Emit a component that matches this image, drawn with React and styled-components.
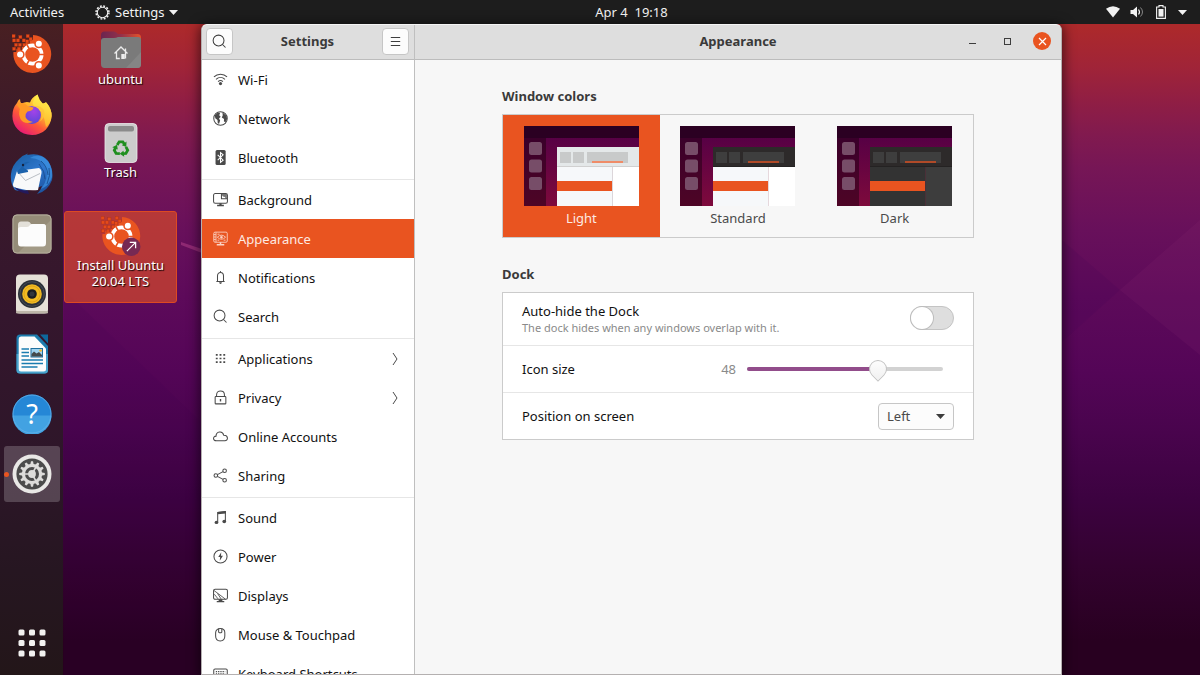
import React, { useState } from 'react';
import styled, { createGlobalStyle, css } from 'styled-components';

const GlobalStyle = createGlobalStyle`
  * {
    box-sizing: border-box;
  }
  body {
    margin: 0;
    font-family: 'Noto Sans', 'Open Sans', sans-serif;
    font-size: 13px;
    line-height: 18px;
    color: #111111;
  }
  button, input, select {
    font: inherit;
    color: inherit;
    margin: 0;
  }
  button {
    border: none;
    background: none;
    padding: 0;
  }
`;

const Screen = styled.div`
  display: flex;
  flex-direction: column;
  height: 100vh;
  overflow: hidden;
  position: relative;
  isolation: isolate;
  background: linear-gradient(
    #ac292b 4%, #a02438 10%, #901e44 15%, #811a4f 20%, #761656 25%, #68105b 34%,
    #5d0a5a 44%, #540557 55%, #49044d 64%, #3c0240 74%, #33022f 84%, #280020 95%
  );
`;

const Wallpaper = styled.svg`
  position: absolute;
  inset: 0;
  width: 100%;
  height: 100%;
  z-index: -1;
`;

const TopBar = styled.header`
  display: grid;
  grid-template-columns: 63px 1fr auto 1fr;
  align-items: center;
  height: 24px;
  flex: none;
  background-color: #1d1d1d;
  color: #f2f2f2;
  white-space: nowrap;
`;

const BarButton = styled.button`
  display: flex;
  align-items: center;
  gap: 5px;
  padding-left: ${(props) => props.$left || 0}px;
`;

const Status = styled.button`
  display: flex;
  justify-content: flex-end;
  align-items: center;
  gap: 10px;
  padding-right: 13px;
`;

const Desktop = styled.div`
  display: flex;
  flex: 1;
  min-height: 0;
`;

const DockBar = styled.nav`
  display: flex;
  flex-direction: column;
  align-items: center;
  gap: 4px;
  width: 63px;
  flex: none;
  padding: 2px 0 4px;
  background: linear-gradient(#481f22, #3c1a2a 16%, #34162d 45%, #2e1629 66%, #261621 84%, #231619);
`;

const DockItem = styled.button`
  display: flex;
  align-items: center;
  justify-content: center;
  width: 56px;
  height: 56px;
  flex: none;
  border-radius: 3px;
  ${(props) => props.$active && css`
    position: relative;
    background-color: rgba(255, 255, 255, 0.2);
    &::before {
      content: '';
      position: absolute;
      left: 0;
      width: 5px;
      height: 5px;
      border-radius: 50%;
      background-color: #e95420;
    }
  `}
  ${(props) => props.$last && css`
    margin-top: auto;
  `}
`;

const Shortcuts = styled.div`
  display: flex;
  flex-direction: column;
  gap: 1px;
  width: 138px;
  flex: none;
  padding: 1px 0 0 1px;
`;

const Shortcut = styled.button`
  display: flex;
  flex-direction: column;
  align-items: center;
  gap: 1px;
  width: 113px;
  height: 92px;
  padding-top: 4px;
  border: 1px solid ${(props) => (props.$selected ? '#dd4a22' : 'transparent')};
  border-radius: 3px;
  background-color: ${(props) => (props.$selected ? 'rgba(214, 72, 42, 0.7)' : 'transparent')};
  color: #ffffff;
  line-height: 16px;
  text-shadow: 1px 1px 1px rgba(0, 0, 0, 0.9);
`;

const ShortcutLine = styled.span`
  display: block;
`;

const Window = styled.main`
  display: flex;
  flex: 1;
  min-width: 0;
  margin-right: 138px;
  border: 1px solid #b4b0b0;
  border-top-color: #f4f4f4;
  border-radius: 6px 6px 0 0;
  overflow: hidden;
  background-color: #f7f7f7;
  box-shadow: 0 2px 12px 2px rgba(0, 0, 0, 0.55);
`;

const Sidebar = styled.aside`
  display: flex;
  flex-direction: column;
  width: 213px;
  flex: none;
  border-right: 1px solid #bfbfbf;
  background-color: #ffffff;
`;

const HeaderBar = styled.div`
  display: flex;
  align-items: center;
  justify-content: space-between;
  height: 35px;
  flex: none;
  padding: 0 5px 2px 4px;
  border-bottom: 1px solid #bcbcbc;
  background-color: #dedede;
`;

const PanelHeader = styled(HeaderBar)`
  display: grid;
  grid-template-columns: 1fr auto 1fr;
  padding: 0 10px 2px;
`;

const Title = styled.h1`
  margin: 0;
  font-size: 13px;
  font-weight: 700;
  color: #3a3a3a;
`;

const HeaderButton = styled.button`
  display: flex;
  align-items: center;
  justify-content: center;
  width: 27px;
  height: 27px;
  border: 1px solid #c6c6c6;
  border-radius: 4px;
  background-color: #fcfcfc;
  color: #3d3d3d;
`;

const WindowControls = styled.div`
  display: flex;
  justify-content: flex-end;
  gap: 17px;
`;

const WindowControl = styled.button`
  display: flex;
  align-items: center;
  justify-content: center;
  width: 18px;
  height: 18px;
  border-radius: 50%;
  color: ${(props) => (props.$close ? '#ffffff' : '#3d3d3d')};
  background-color: ${(props) => (props.$close ? '#e95420' : 'transparent')};
`;

const NavList = styled.nav`
  flex: 1;
  min-height: 0;
  overflow: hidden;
`;

const NavGroup = styled.div`
  padding-bottom: 2px;
  border-bottom: 1px solid #e6e6e6;
`;

const NavRow = styled.button`
  display: flex;
  align-items: center;
  gap: 10px;
  width: 100%;
  height: 39px;
  padding: 0 15px 0 11px;
  text-align: left;
  color: ${(props) => (props.$active ? '#fdeae3' : '#111111')};
  background-color: ${(props) => (props.$active ? '#e95420' : 'transparent')};
  svg {
    flex: none;
    color: ${(props) => (props.$active ? '#fbd5c8' : '#4a4a4a')};
  }
`;

const NavLabel = styled.span`
  flex: 1;
`;

const Panel = styled.section`
  display: flex;
  flex-direction: column;
  flex: 1;
  min-width: 0;
`;

const PanelBody = styled.div`
  width: 100%;
  max-width: 472px;
  margin: 0 auto;
`;

const SectionTitle = styled.h2`
  margin: 27px 0 9px;
  font-size: 13px;
  font-weight: 700;
  line-height: 18px;
  color: #3a3a3a;
`;

const Themes = styled.div`
  display: grid;
  grid-template-columns: repeat(3, 1fr);
  height: 124px;
  border: 1px solid #cbcbcb;
`;

const ThemeCard = styled.label`
  display: flex;
  flex-direction: column;
  align-items: center;
  gap: 3px;
  padding-top: 11px;
  color: ${(props) => (props.$active ? '#fdeae3' : '#4a4a4a')};
  background-color: ${(props) => (props.$active ? '#e95420' : 'transparent')};
`;

const HiddenRadio = styled.input`
  position: absolute;
  opacity: 0;
  pointer-events: none;
`;

const Options = styled.div`
  border: 1px solid #cbcbcb;
  background-color: #ffffff;
`;

const OptionRow = styled.div`
  display: flex;
  align-items: center;
  gap: 11px;
  height: ${(props) => (props.$tall ? 52 : 46)}px;
  padding: ${(props) => (props.$tall ? '0 19px 2px' : '0 19px')};
  & + & {
    box-sizing: content-box;
    border-top: 1px solid #e6e6e6;
  }
`;

const OptionLabel = styled.label`
  flex: 1;
`;

const Hint = styled.span`
  display: block;
  font-size: 11px;
  line-height: 15px;
  color: #8a8a8a;
`;

const Switch = styled.input`
  appearance: none;
  display: flex;
  width: 44px;
  height: 24px;
  border: 1px solid #c4c4c4;
  border-radius: 12px;
  background-color: ${(props) => (props.checked ? '#924d8b' : '#dedede')};
  justify-content: ${(props) => (props.checked ? 'flex-end' : 'flex-start')};
  &::before {
    content: '';
    width: 22px;
    height: 22px;
    border-radius: 50%;
    background-color: #ffffff;
    box-shadow: 0 0 0 1px #bdbdbd;
  }
`;

const Value = styled.output`
  color: #8a8a8a;
`;

const Slider = styled.div`
  display: grid;
  align-items: center;
  width: 196px;
  margin-right: 11px;
`;

const SliderBar = styled.div`
  grid-area: 1 / 1;
  height: 4px;
  border-radius: 2px;
  background-color: #d2d2d2;
  overflow: hidden;
`;

const SliderFill = styled.div`
  height: 100%;
  background-color: #924d8b;
`;

/* runs half a thumb past the bar at both ends, so that the pin's tip can reach them */
const Range = styled.input`
  grid-area: 1 / 1;
  appearance: none;
  height: 24px;
  width: calc(100% + 18px);
  margin: 0 -9px;
  background: transparent;
  &::-webkit-slider-thumb {
    appearance: none;
    width: 18px;
    height: 18px;
    border: 1px solid #c2c2c2;
    border-radius: 50% 50% 0 50%;
    background: linear-gradient(135deg, #ffffff, #f0f0f0);
    transform: rotate(45deg);
  }
`;

const SelectBox = styled.div`
  display: grid;
  align-items: center;
  justify-items: end;
  svg {
    grid-area: 1 / 1;
    margin-right: 9px;
    pointer-events: none;
  }
`;

const Select = styled.select`
  grid-area: 1 / 1;
  appearance: none;
  width: 76px;
  height: 27px;
  padding: 0 8px;
  border: 1px solid #c6c6c6;
  border-radius: 4px;
  background-color: #fcfcfc;
  color: #4a4a4a;
`;

const Symbolic = ({ size = 15, children }) => (
  <svg width={size} height={size} viewBox="0 0 16 16" fill="none" stroke="currentColor" strokeWidth="1.1">
    {children}
  </svg>
);

const Caret = ({ width = 9, color = 'currentColor' }) => (
  <svg width={width} height="5" viewBox="0 0 9 5">
    <path d="M0 0H9L4.5 5Z" fill={color} />
  </svg>
);

const navIcons = {
  wifi: (
    <>
      <path d="M1 5.2C4.8 1.4 11.2 1.4 15 5.2M3.2 7.8C6 5.2 10 5.2 12.8 7.8M5.4 10.2C7 8.9 9 8.9 10.6 10.2" />
      <circle cx="8" cy="12.3" r="1.7" fill="currentColor" stroke="none" />
    </>
  ),
  network: (
    <>
      <circle cx="8" cy="8" r="7.2" />
      <path d="M2 4.5L5 1.8 7.6 2 6.6 4.4 8.2 6.2 6.4 8 7.6 10 6.4 13.8 5 12.4 4.8 9.6 2.4 7.6ZM10 1.4L14.4 5 15 8.4 13.2 12.2 11.6 11 11.8 8.4 9.4 6.8 10.4 4.6Z" fill="currentColor" stroke="none" />
    </>
  ),
  bluetooth: (
    <>
      <rect x="2.7" y="0" width="10.8" height="16" rx="1.6" fill="currentColor" stroke="none" />
      <path d="M5 5.2L10.8 10.8 8 13.2V2.8L10.8 5.2 5 10.8" stroke="#ffffff" />
    </>
  ),
  background: (
    <>
      <rect x="0.6" y="1.6" width="14.8" height="10.4" rx="1.8" />
      <path d="M9.2 2H14.8V7.6Q13 7.4 12.8 5.2Q9.600 5 9.2 2Z" fill="currentColor" stroke="none" opacity="0.75" />
      <path d="M9 2.2V7.2H14.8" />
      <path d="M6.8 12H9.2V13.6H11.6V15.2H4.4V13.6H6.8Z" fill="currentColor" stroke="none" />
    </>
  ),
  appearance: (
    <g strokeWidth="0.9">
      <rect x="0.8" y="1.2" width="14.4" height="10.8" rx="1.4" />
      <path d="M3.2 1.5V12M1 3.8H3M1 6.4H3M1 9H3M4.6 6.6Q9 2.2 13.4 6.6Q9 11 4.6 6.6ZM4.8 3.4H7M11.4 9.8H13.4M4.8 9.8H6.6" />
      <circle cx="9" cy="6.6" r="1" fill="currentColor" />
      <path d="M8 12V14.4M4 14.6H12" strokeWidth="1.6" />
    </g>
  ),
  notifications: (
    <>
      <path d="M3.6 12.2H12.4M4.8 12V6.4C4.8 1.4 11.2 1.4 11.2 6.4V12" />
      <path d="M6.5 13H9.5Q9.2 14.8 8 14.8Q6.8 14.8 6.5 13Z" fill="currentColor" stroke="none" />
      <path d="M8 1.2V2.6" />
    </>
  ),
  search: (
    <>
      <circle cx="7" cy="7" r="5.8" />
      <path d="M11.2 11.2L14.4 14.4" />
    </>
  ),
  applications: (
    <path d="M3 4.2H5M7 4.2H9M11 4.2H13M3 8H5M7 8H9M11 8H13M3 11.8H5M7 11.8H9M11 11.8H13" strokeWidth="1.8" />
  ),
  privacy: (
    <>
      <rect x="2.3" y="7" width="11.4" height="7.8" rx="0.8" />
      <path d="M3.8 7V5.2C3.8 -0.4 12.2 -0.4 12.2 5.2V7" />
      <path d="M8 9.6V12.2" strokeWidth="1.5" />
    </>
  ),
  accounts: (
    <path d="M3.6 12.6C-0.6 12.6 -0.2 7.6 3.2 7.6C3.4 2.4 10.2 1.4 11.4 6.6C16.4 6.4 16.6 12.6 12.6 12.6Z" />
  ),
  sharing: (
    <>
      <circle cx="3" cy="8" r="1.9" />
      <circle cx="12.4" cy="3" r="1.9" />
      <circle cx="12.4" cy="13" r="1.9" />
      <path d="M4.7 7.1L10.7 3.9M4.7 8.9L10.7 12.1" />
    </>
  ),
  sound: (
    <>
      <path d="M5 13V2.6L13.2 1.6V12" />
      <path d="M5 2L13.7 1V3.6L5 4.6Z" fill="currentColor" stroke="none" />
      <ellipse cx="3.7" cy="13.2" rx="2" ry="1.8" fill="currentColor" stroke="none" />
      <ellipse cx="12" cy="12.2" rx="2" ry="1.8" fill="currentColor" stroke="none" />
    </>
  ),
  power: (
    <>
      <circle cx="8" cy="8" r="7" />
      <path d="M8.8 3.4L5.6 8.6H7.6L7.2 12.6 10.6 7.2H8.5Z" fill="currentColor" stroke="none" />
    </>
  ),
  displays: (
    <>
      <rect x="0.6" y="1.4" width="14.8" height="10.6" rx="1.6" />
      <path d="M1 2.6L13.4 12M1.4 6.6L5.4 11.6M4.8 5.8L8.6 11.6" strokeWidth="0.9" />
      <path d="M6 12H10V13.8H12V15.2H4V13.8H6Z" fill="currentColor" stroke="none" />
    </>
  ),
  mouse: (
    <>
      <path d="M2.8 6C2.8 0.2 12.6 0.2 12.6 6V9.6C12.6 16.6 2.8 16.6 2.8 9.6Z" />
      <path d="M6 1.9V5.4Q7.7 7 9.4 5.4V1.9" />
    </>
  ),
  keyboard: (
    <>
      <rect x="0.8" y="3.2" width="14.4" height="10" rx="1.4" />
      <path d="M3 6H13M3 8.4H13" strokeDasharray="1.4 1" />
    </>
  ),
};

const navGroups = [
  [
    { icon: 'wifi', label: 'Wi-Fi' },
    { icon: 'network', label: 'Network' },
    { icon: 'bluetooth', label: 'Bluetooth' },
  ],
  [
    { icon: 'background', label: 'Background' },
    { icon: 'appearance', label: 'Appearance' },
    { icon: 'notifications', label: 'Notifications' },
    { icon: 'search', label: 'Search' },
  ],
  [
    { icon: 'applications', label: 'Applications', more: true },
    { icon: 'privacy', label: 'Privacy', more: true },
    { icon: 'accounts', label: 'Online Accounts' },
    { icon: 'sharing', label: 'Sharing' },
  ],
  [
    { icon: 'sound', label: 'Sound' },
    { icon: 'power', label: 'Power' },
    { icon: 'displays', label: 'Displays' },
    { icon: 'mouse', label: 'Mouse & Touchpad' },
    { icon: 'keyboard', label: 'Keyboard Shortcuts' },
  ],
];

const themes = [
  { name: 'Light', header: '#e4e8e9', tool: '#c8caca', line: '#ef8c68', edge: '#d0d0d0', body: '#f6f8fa', side: '#ffffff', split: '#dcd6da' },
  { name: 'Standard', header: '#2d2a2a', tool: '#3e3e3e', line: '#b04a28', edge: '#242222', body: '#f6f8fa', side: '#ffffff', split: '#e6d8dd' },
  { name: 'Dark', header: '#2d2a2a', tool: '#3e3e3e', line: '#b04a28', edge: '#242222', body: '#333333', side: '#3d3d3d', split: '#4a3038' },
];

const ThemePreview = ({ theme }) => (
  <svg width="115" height="80" viewBox="0 0 115 80" shapeRendering="crispEdges">
    <defs>
      <linearGradient id={`desk${theme.name}`} x1="0" y1="0" x2="0" y2="1">
        <stop offset="0.1" stopColor="#550045" />
        <stop offset="1" stopColor="#7e0a3c" />
      </linearGradient>
    </defs>
    <rect width="115" height="80" fill={`url(#desk${theme.name})`} />
    <rect width="22" height="80" fill="#1e0010" opacity="0.5" />
    <rect width="115" height="12" fill="#2b0022" />
    <g fill="#774d68" shapeRendering="auto">
      <rect x="5" y="16" width="13" height="13" rx="2.5" />
      <rect x="5" y="33.5" width="13" height="13" rx="2.5" />
      <rect x="5" y="51" width="13" height="13" rx="2.5" />
    </g>
    <rect x="33" y="21" width="82" height="20" fill={theme.header} />
    <rect x="33" y="41" width="55" height="39" fill={theme.body} />
    <rect x="89" y="41" width="26" height="39" fill={theme.side} />
    <rect x="33" y="40" width="82" height="1" fill={theme.edge} />
    <rect x="88" y="41" width="1" height="39" fill={theme.split} />
    <rect x="36" y="26" width="11" height="11" fill={theme.tool} />
    <rect x="49" y="26" width="11" height="11" fill={theme.tool} />
    <rect x="63" y="26" width="41" height="11" fill={theme.tool} />
    <rect x="68" y="35" width="31" height="2" fill={theme.line} />
    <rect x="33" y="55" width="55" height="10" fill="#e95420" />
  </svg>
);

const pixels = [
  [-0.5, 0], [6.5, 1], [14, 0], [17, 3], [0, 4.5], [4, 4.5], [10, 4.5], [13.5, 5.5],
  [2, 9], [6, 9], [10.5, 9], [0, 13], [5, 13],
];

const UbuntuIcon = ({ children }) => (
  <svg width="40" height="40" viewBox="-0.5 -0.5 41 41">
    <path
      d="M21 0.6A19.4 19.4 0 1 1 1 18H4V14.5H8V16.5H9.5V12.5H14V9H17.5V5.5H21Z"
      fill="#e95420"
    />
    {pixels.map(([x, y]) => (
      <rect key={`${x}-${y}`} x={x} y={y} width="3.2" height="3.2" fill="#e64a1a" stroke="#a8320f" strokeWidth="0.3" />
    ))}
    <circle cx="20.5" cy="20.5" r="9.4" fill="none" stroke="#ffffff" strokeWidth="3.8" />
    <path d="M20.5 20.5H33M20.5 20.5L14 9.200M20.5 20.5L14 31.800" stroke="#e95420" strokeWidth="1.6" />
    <g fill="#ffffff" stroke="#e95420" strokeWidth="1.6">
      <circle cx="7.8" cy="20.5" r="3.9" />
      <circle cx="27" cy="9.4" r="3.9" />
      <circle cx="27" cy="31.8" r="3.9" />
    </g>
    {children}
  </svg>
);

const FirefoxIcon = () => (
  <svg width="40" height="41" viewBox="0 0 40 41">
    <defs>
      <linearGradient id="fxBody" x1="0.85" y1="0.1" x2="0.25" y2="1">
        <stop offset="0" stopColor="#fff14a" />
        <stop offset="0.35" stopColor="#ffb52e" />
        <stop offset="0.62" stopColor="#ff5a37" />
        <stop offset="1" stopColor="#e5157a" />
      </linearGradient>
      <linearGradient id="fxTail" x1="0.6" y1="0" x2="0.4" y2="1">
        <stop offset="0" stopColor="#fff650" />
        <stop offset="1" stopColor="#ffb02a" />
      </linearGradient>
      <radialGradient id="fxGlobe" cx="0.6" cy="0.3" r="0.8">
        <stop offset="0" stopColor="#a343e8" />
        <stop offset="0.6" stopColor="#7146dd" />
        <stop offset="1" stopColor="#4a4fd0" />
      </radialGradient>
    </defs>
    <path d="M5 9Q6 6 8 5Q8 8 9.5 9.5Q14 7 18 8.5Q19 4 25.5 0.5Q26 6 30 9.5Q33 9 34 8Q40 15 39.6 22C39 33 31 41 20 41C8 41 0.4 32 0.4 22Q0.4 14 5 9Z" fill="url(#fxBody)" />
    <path d="M25.5 0.5Q27 6 31.5 10.5Q34.5 13 34.5 9Q39.5 15 39.6 22Q39 29 34 33Q33 26 30 18Q21 13 20.5 9Q22 4 25.5 0.5Z" fill="url(#fxTail)" />
    <circle cx="20" cy="21" r="9" fill="url(#fxGlobe)" />
    <path d="M4.5 10Q12 7 16 12.5L21.5 13.5Q21 17 15.5 17.5Q12.8 20 13.5 23Q15 27 21 28Q12 31 8.5 25Q6 19 8 15Z" fill="#ff9a26" />
    <path d="M20 13Q27 12 29 17Q31 24 27 28Q34 24 32 16Q27 10 20 13Z" fill="#ffc43a" opacity="0.8" />
  </svg>
);

const ThunderbirdIcon = () => (
  <svg width="44" height="42" viewBox="0 0 44 42">
    <defs>
      <linearGradient id="tbBody" x1="0.2" y1="0" x2="0.9" y2="1">
        <stop offset="0" stopColor="#1a5fa5" />
        <stop offset="0.5" stopColor="#2f78cf" />
        <stop offset="1" stopColor="#184a94" />
      </linearGradient>
    </defs>
    <path d="M9 6Q13 2 18 0.5L17 2Q31 -1 38 8Q44 17 42 27Q38 38 27 41Q31 37 32 33Q14 40 5 37Q0 30 1 21Q2 12 9 6Z" fill="url(#tbBody)" />
    <path d="M20 5Q32 5 36 15Q39 26 31 36Q39 33 42 24Q43 10 33 4Q26 1 20 5Z" fill="#3d93e2" opacity="0.7" />
    <path d="M31 8Q37 13 38 22M29 11Q35 18 35 26M39 15Q41 22 37 31" fill="none" stroke="#174988" strokeWidth="0.8" />
    <path d="M7 18L29 15Q32 17 31.5 20L28 37Q17 38 4.5 34.5Q2.5 33.5 3 31Z" fill="#f8f9fa" />
    <path d="M7.5 18.5L15.5 27.5 30 20.5" fill="none" stroke="#b9bec4" strokeWidth="1" />
    <path d="M7 18Q11 16 13 11Q15 8 20 9Q14 11 13.5 15Q19 17 18 19L8 21Z" fill="#1b62ac" />
    <circle cx="13" cy="12" r="1.2" fill="#17233f" />
    <path d="M4 34Q13 38 18 38L19 41Q9 40 4 34Z" fill="#23195c" />
  </svg>
);

const FilesIcon = () => (
  <svg width="40" height="40" viewBox="0 0 40 40">
    <rect x="0.5" y="0.5" width="39" height="39" rx="4.5" fill="#a29a86" />
    <path d="M5 1H35Q39 1 39 5V6L6 39H5Q1 39 1 35V5Q1 1 5 1Z" fill="#958c78" />
    <rect x="1" y="1" width="38" height="38" rx="4" fill="none" stroke="#b3ac9b" />
    <path d="M6 11Q6 7.5 9 7.5H16Q18 7.5 19 10H31Q34 10 34 13V16H6Z" fill="#e3e0d9" />
    <path d="M6 15Q6 13 9 13H15Q17 13 18 11Q19 10 21 10H31Q34 10 34 13V29Q34 32.5 31 32.5H9Q6 32.5 6 29Z" fill="#fcfcfc" />
  </svg>
);

const MusicIcon = () => (
  <svg width="40" height="40" viewBox="0 0 40 40">
    <rect x="4" y="0.5" width="32" height="39" rx="4" fill="#e6e1d8" />
    <rect x="4" y="37" width="32" height="2.5" rx="1.2" fill="#bdb6a9" />
    <circle cx="20" cy="20" r="14" fill="#2b3038" />
    <circle cx="20" cy="20" r="12.2" fill="none" stroke="#454b55" strokeWidth="1" />
    <circle cx="20" cy="20" r="9.8" fill="#f2bb22" />
    <circle cx="20" cy="20" r="8" fill="none" stroke="#d99f18" strokeWidth="0.8" />
    <circle cx="20" cy="20" r="4.8" fill="#191c22" />
    <circle cx="20" cy="20" r="2.5" fill="#31353d" />
  </svg>
);

const WriterIcon = () => (
  <svg width="40" height="40" viewBox="0 0 40 40">
    <path d="M8 0.5H25L36 12V36Q36 39.5 32.5 39.5H8Q4.5 39.5 4.5 36V4Q4.5 0.5 8 0.5Z" fill="#1c7cae" />
    <path d="M5 20H36V36Q36 39.5 32.5 39.5H8Q4.5 39.5 4.5 36V20Z" fill="#48a3cc" />
    <path d="M28 0.5H36V9.5Z" fill="#0e689d" />
    <path d="M9 2.5H22.5L34 14.5V35Q34 37.5 31.5 37.5H9Q6.7 37.5 6.7 35V5Q6.7 2.5 9 2.5Z" fill="#fcfcfc" />
    <path d="M9.5 15H17M9.5 18.5H17M9.5 22H17M9.5 26H31M9.5 29.5H31M9.5 33H25.5" stroke="#1a7cb0" strokeWidth="1.3" />
    <rect x="19" y="14.5" width="11.5" height="8.5" fill="#9fd3f0" stroke="#1f6f9d" />
    <path d="M19.5 22.5V20L22 17.5 24.5 19.5 27 18 30 21V22.5Z" fill="#444a4c" />
    <circle cx="28.6" cy="16.5" r="1.3" fill="#f4b62c" />
  </svg>
);

const HelpIcon = () => (
  <svg width="40" height="40" viewBox="0 0 40 40">
    <circle cx="20" cy="20" r="19.5" fill="#2587d6" />
    <path d="M0.5 21.5A19.5 19.5 0 0 0 39.5 21.5Z" fill="#42a2e2" />
    <circle cx="20" cy="20" r="19" fill="none" stroke="#63b3ea" strokeWidth="0.8" />
    <text x="20" y="30" textAnchor="middle" fontFamily="Noto Sans" fontSize="27" fill="#ffffff">?</text>
  </svg>
);

const teeth = [0, 30, 60, 90, 120, 150, 180, 210, 240, 270, 300, 330];

const GearIcon = () => (
  <svg width="40" height="40" viewBox="0 0 40 40">
    <circle cx="20" cy="20" r="19.5" fill="#e9e8e6" />
    <circle cx="20" cy="20" r="15.6" fill="#4b4b4b" />
    {teeth.map((angle) => (
      <path key={angle} d="M18.2 11L19 7.2H21L21.8 11Z" fill="#dddcda" transform={`rotate(${angle} 20 20)`} />
    ))}
    <circle cx="20" cy="20" r="8.6" fill="none" stroke="#dddcda" strokeWidth="3.2" />
    <circle cx="20" cy="20" r="3.9" fill="#dddcda" />
    <path d="M20 20H11M20 20L24.5 12.2M20 20L24.5 27.8" stroke="#dddcda" strokeWidth="1.6" />
  </svg>
);

const AppGridIcon = () => (
  <svg width="28" height="28" viewBox="0 0 28 28" fill="#f2f1f0">
    {[0.5, 11, 21.5].map((y) => [0.5, 11, 21.5].map((x) => (
      <rect key={`${x}-${y}`} x={x} y={y} width="6" height="6" rx="1.5" />
    )))}
  </svg>
);

const HomeFolderIcon = () => (
  <svg width="42" height="40" viewBox="0 0 42 40">
    <defs>
      <linearGradient id="folderBack">
        <stop offset="0" stopColor="#6b2550" />
        <stop offset="0.5" stopColor="#93304a" />
        <stop offset="1" stopColor="#e4532a" />
      </linearGradient>
    </defs>
    <path d="M1 5Q1 1.5 4.5 1.5H14Q16 1.5 18 4H37.5Q41 4 41 7.5V20H1Z" fill="url(#folderBack)" />
    <path d="M1 11Q1 8 4 8H14Q16 8 18 7H38Q41 7 41 10V34Q41 38 37.5 38H4.5Q1 38 1 34Z" fill="#7a7a7a" />
    <path d="M41 22V34Q41 38 37.5 38H26Z" fill="#858585" />
    <path d="M14.5 23.5L21 17L27.5 23.5M16.5 22V28.5H19.8M25.5 22V28.5M25.5 18.5V21" fill="none" stroke="#ececec" strokeWidth="1.3" />
    <rect x="21.3" y="24" width="3.5" height="5" fill="#ececec" />
  </svg>
);

const TrashIcon = () => (
  <svg width="40" height="40" viewBox="0 0 40 40">
    <rect x="4" y="0.5" width="32" height="39" rx="4" fill="#cccccc" stroke="#ececec" strokeWidth="0.8" />
    <rect x="7" y="3" width="26" height="5.5" rx="2" fill="#8b8b8b" />
    {[0, 120, 240].map((angle) => (
      <g key={angle} transform={`rotate(${angle} 20 25.5)`}>
        <path d="M16.2 22L18.2 18.8H21.8L23.6 21.6" fill="none" stroke="#1f8f1f" strokeWidth="2.8" />
        <path d="M25.5 18.6L25.3 24 20.8 22.2Z" fill="#1f8f1f" />
      </g>
    ))}
  </svg>
);

const SettingsGlyph = () => (
  <svg width="15" height="15" viewBox="0 0 16 16" fill="none" stroke="#f2f2f2">
    <circle cx="8" cy="8" r="6.9" strokeWidth="1.6" strokeDasharray="2 1.61" />
    <circle cx="8" cy="8" r="5.6" strokeWidth="1.2" />
  </svg>
);

const App = () => {
  const [panel, setPanel] = useState('Appearance');
  const [theme, setTheme] = useState('Light');
  const [autoHide, setAutoHide] = useState(false);
  const [iconSize, setIconSize] = useState(48);
  const [position, setPosition] = useState('Left');

  return (
    <>
      <GlobalStyle />
      <Screen>
        <Wallpaper viewBox="0 0 1200 675" preserveAspectRatio="none">
          <path d="M64 290L230 450V675H64Z" fill="#3a0050" opacity="0.1" />
          <path d="M181 242L202 249V253L181 245Z" fill="#c04a90" opacity="0.45" />
          <path d="M1062 240L1120 290L1062 342Z" fill="#3a0050" opacity="0.12" />
          <path d="M1120 290L1200 220V355Z" fill="#9a3a80" opacity="0.1" />
        </Wallpaper>
        <TopBar>
          <BarButton $left={10}>Activities</BarButton>
          <BarButton $left={32}>
            <SettingsGlyph />
            Settings
            <Caret />
          </BarButton>
          <BarButton>Apr 4&nbsp; 19:18</BarButton>
          <Status aria-label="System menu">
            <svg width="14" height="12" viewBox="0 0 14 12">
              <path d="M0 2.8Q7 -2.4 14 2.8L7 11.5Z" fill="#f2f2f2" />
            </svg>
            <svg width="14" height="12" viewBox="0 0 14 12" fill="none" stroke="#f2f2f2">
              <path d="M0.5 4H3L7 0.5V11.5L3 8H0.5Z" fill="#f2f2f2" stroke="none" />
              <path d="M8.5 3.5Q10.5 6 8.5 8.5" strokeWidth="1.2" />
              <path d="M10.5 1.5Q14.5 6 10.5 10.5" opacity="0.5" />
            </svg>
            <svg width="14" height="14" viewBox="0 0 14 14">
              <path d="M5 0.6H9V2H11.4V13.4H2.6V2H5Z" fill="none" stroke="#f2f2f2" strokeWidth="1.1" />
              <rect x="4.5" y="4" width="5" height="7.6" fill="#f2f2f2" />
            </svg>
            <Caret />
          </Status>
        </TopBar>
        <Desktop>
          <DockBar aria-label="Dock">
            <DockItem aria-label="Install Ubuntu"><UbuntuIcon /></DockItem>
            <DockItem aria-label="Firefox"><FirefoxIcon /></DockItem>
            <DockItem aria-label="Thunderbird"><ThunderbirdIcon /></DockItem>
            <DockItem aria-label="Files"><FilesIcon /></DockItem>
            <DockItem aria-label="Rhythmbox"><MusicIcon /></DockItem>
            <DockItem aria-label="Writer"><WriterIcon /></DockItem>
            <DockItem aria-label="Help"><HelpIcon /></DockItem>
            <DockItem aria-label="Settings" $active><GearIcon /></DockItem>
            <DockItem aria-label="Show applications" $last><AppGridIcon /></DockItem>
          </DockBar>
          <Shortcuts>
            <Shortcut><HomeFolderIcon />ubuntu</Shortcut>
            <Shortcut><TrashIcon />Trash</Shortcut>
            <Shortcut $selected>
              <UbuntuIcon>
                <circle cx="30.5" cy="31" r="9.5" fill="#772953" />
                <path d="M26 35.5L35 26.5M29 26.5H35V32.5" fill="none" stroke="#ffffff" strokeWidth="1.2" />
              </UbuntuIcon>
              <span>
                <ShortcutLine>Install Ubuntu</ShortcutLine>
                <ShortcutLine>20.04 LTS</ShortcutLine>
              </span>
            </Shortcut>
          </Shortcuts>
          <Window>
            <Sidebar>
              <HeaderBar>
                <HeaderButton aria-label="Search settings"><Symbolic>{navIcons.search}</Symbolic></HeaderButton>
                <Title>Settings</Title>
                <HeaderButton aria-label="Menu">
                  <Symbolic><path d="M3 3.8H13M3 8H13M3 12.2H13" /></Symbolic>
                </HeaderButton>
              </HeaderBar>
              <NavList>
                {navGroups.map((group) => (
                  <NavGroup key={group[0].label}>
                    {group.map((item) => (
                      <NavRow key={item.label} $active={panel === item.label} onClick={() => setPanel(item.label)}>
                        <Symbolic>{navIcons[item.icon]}</Symbolic>
                        <NavLabel>{item.label}</NavLabel>
                        {item.more && (
                          <svg width="8" height="14" viewBox="0 0 8 14" fill="none" stroke="currentColor">
                            <path d="M2 1L6 7L2 13" />
                          </svg>
                        )}
                      </NavRow>
                    ))}
                  </NavGroup>
                ))}
              </NavList>
            </Sidebar>
            <Panel>
              <PanelHeader>
                <span />
                <Title>{panel}</Title>
                <WindowControls>
                  <WindowControl aria-label="Minimize">
                    <svg width="9" height="9" viewBox="0 0 9 9"><path d="M1 6.5H8" stroke="currentColor" /></svg>
                  </WindowControl>
                  <WindowControl aria-label="Maximize">
                    <svg width="9" height="9" viewBox="0 0 9 9"><rect x="1.5" y="1.5" width="6" height="6" fill="none" stroke="currentColor" /></svg>
                  </WindowControl>
                  <WindowControl aria-label="Close" $close>
                    <svg width="9" height="9" viewBox="0 0 9 9"><path d="M1 1L8 8M8 1L1 8" stroke="currentColor" strokeWidth="1.2" /></svg>
                  </WindowControl>
                </WindowControls>
              </PanelHeader>
              <PanelBody>
                <SectionTitle>Window colors</SectionTitle>
                <Themes>
                  {themes.map((item) => (
                    <ThemeCard key={item.name} $active={theme === item.name}>
                      <HiddenRadio
                        type="radio"
                        name="theme"
                        checked={theme === item.name}
                        onChange={() => setTheme(item.name)}
                      />
                      <ThemePreview theme={item} />
                      {item.name}
                    </ThemeCard>
                  ))}
                </Themes>
                <SectionTitle>Dock</SectionTitle>
                <Options>
                  <OptionRow $tall>
                    <OptionLabel htmlFor="autoHide">
                      Auto-hide the Dock
                      <Hint>The dock hides when any windows overlap with it.</Hint>
                    </OptionLabel>
                    <Switch
                      id="autoHide"
                      type="checkbox"
                      role="switch"
                      checked={autoHide}
                      onChange={(e) => setAutoHide(e.target.checked)}
                    />
                  </OptionRow>
                  <OptionRow>
                    <OptionLabel htmlFor="iconSize">Icon size</OptionLabel>
                    <Value htmlFor="iconSize">{iconSize}</Value>
                    <Slider>
                      <SliderBar>
                        <SliderFill style={{ width: `${((iconSize - 16) / 48) * 100}%` }} />
                      </SliderBar>
                      <Range
                        id="iconSize"
                        type="range"
                        min="16"
                        max="64"
                        value={iconSize}
                        onChange={(e) => setIconSize(Number(e.target.value))}
                      />
                    </Slider>
                  </OptionRow>
                  <OptionRow>
                    <OptionLabel htmlFor="position">Position on screen</OptionLabel>
                    <SelectBox>
                      <Select id="position" value={position} onChange={(e) => setPosition(e.target.value)}>
                        <option>Left</option>
                        <option>Bottom</option>
                        <option>Right</option>
                      </Select>
                      <Caret color="#3d3d3d" />
                    </SelectBox>
                  </OptionRow>
                </Options>
              </PanelBody>
            </Panel>
          </Window>
        </Desktop>
      </Screen>
    </>
  );
};

export default App;
